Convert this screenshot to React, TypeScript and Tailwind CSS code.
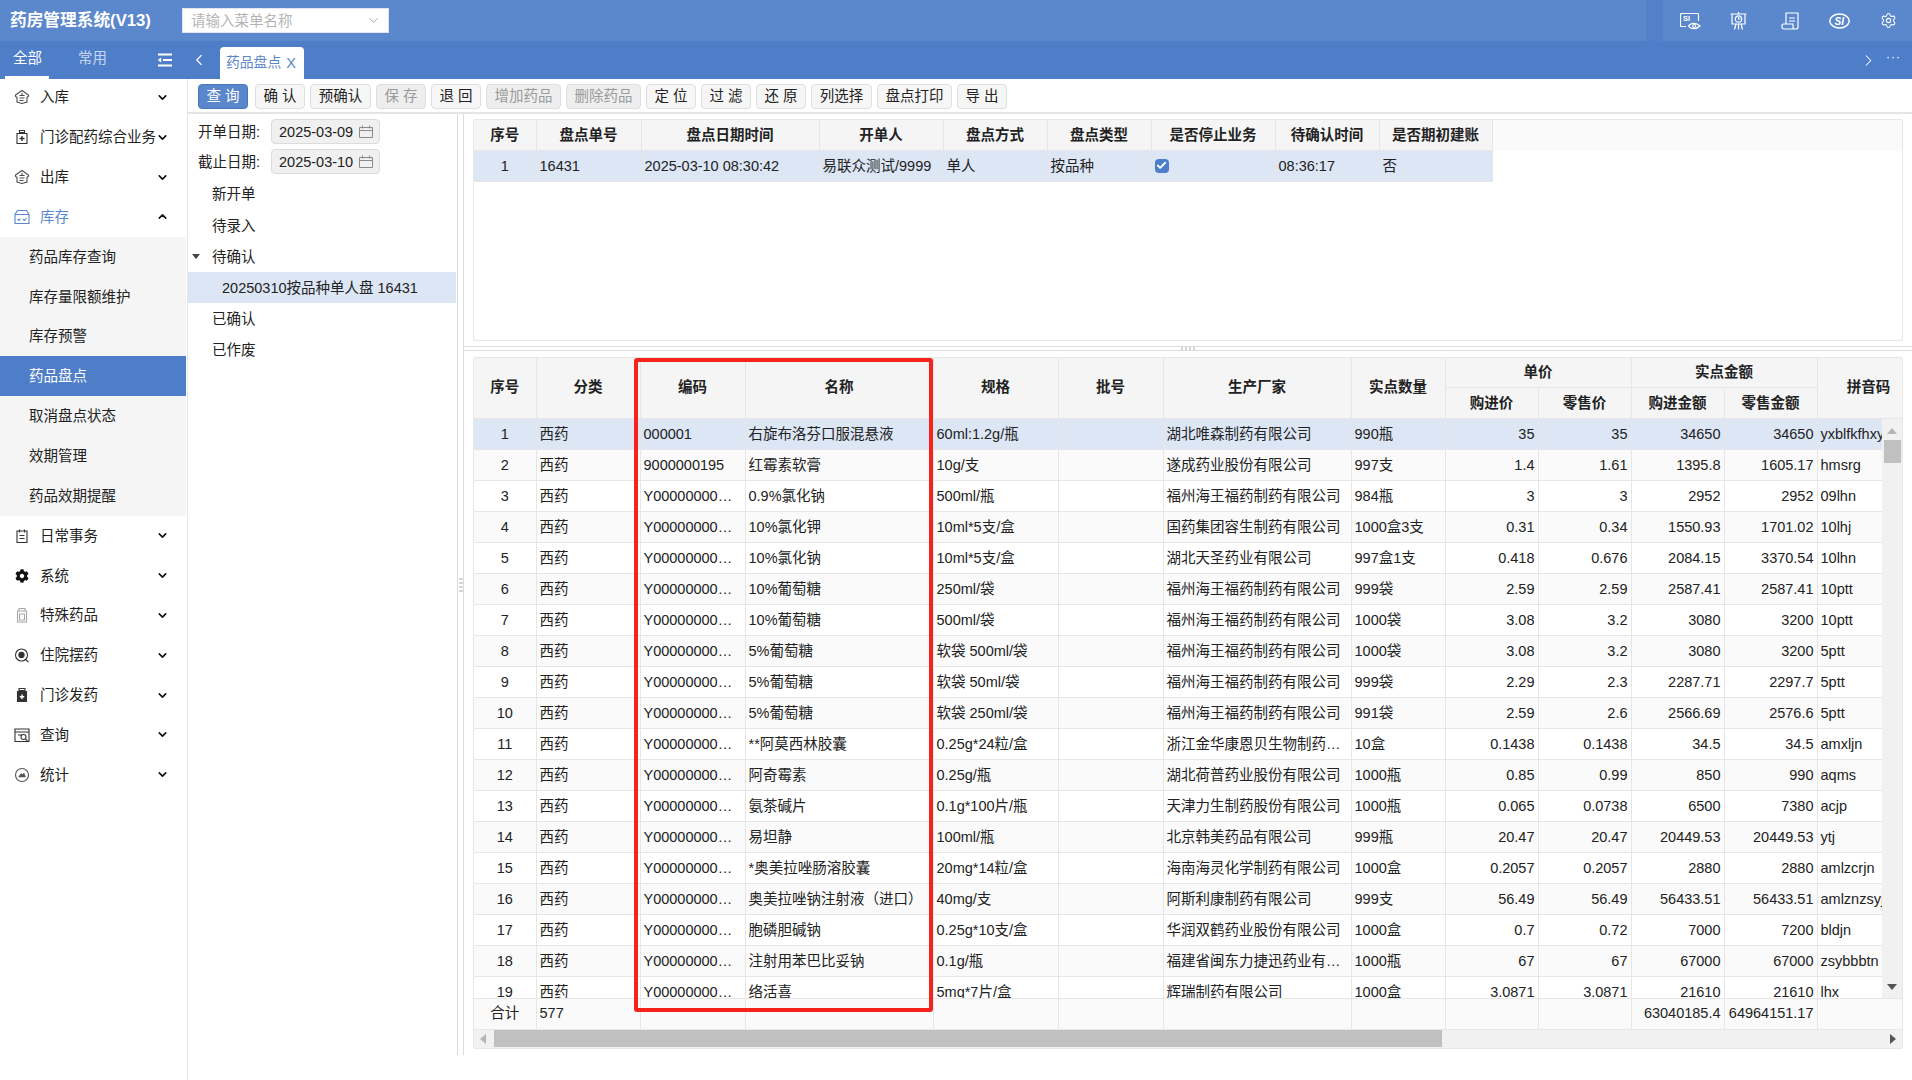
import { ChevronDown, ChevronLeft, ChevronRight, ChevronUp, Check, Settings } from "lucide-react";
import { FaCog } from "react-icons/fa";
import type { ReactNode } from "react";

const line = "#4a4a4a";

function Ico({ children, color = line, size = 16 }: { children: ReactNode; color?: string; size?: number }) {
  return (
    <svg width={size} height={size} viewBox="0 0 16 16" fill="none" stroke={color} strokeWidth="1.1">
      {children}
    </svg>
  );
}

const HouseIcon = () => (
  <Ico>
    <path d="M8 1.5 14.5 6v1.2L13 8.5V13l-5 1.5L3 13V8.5L1.5 7.2V6z" />
    <path d="M5.5 6.5h5M5.5 9h5M5.5 11.5h4M8 4v2" />
  </Ico>
);
const BottlePlusIcon = () => (
  <Ico color="#333">
    <path d="M5.5 1.5h5v2h-5zM3 4.5h10v10H3z" />
    <path d="M8 7v5M5.5 9.5h5" strokeWidth="1.4" />
  </Ico>
);
const StockIcon = () => (
  <Ico color="#5a86cb">
    <path d="M3.5 1.5h9L15 5.5v9H1v-9zM1 5.5h14" />
    <path d="M3.5 10l1.5 1.5 1.5-2M9 10l1.5 1.5 2-2.5" />
  </Ico>
);
const ClipboardIcon = () => (
  <Ico color="#333">
    <path d="M3 3h10v11.5H3zM5.5 1.5v3M10.5 1.5v3M5.5 7.5h5M5.5 10.5h5" />
  </Ico>
);
const JarIcon = () => (
  <Ico color="#a8a8a8">
    <path d="M5 1.5h6v2.5H5zM3.5 4h9v11h-9z" />
    <path d="M5.5 7h5v6h-5z" />
  </Ico>
);
const EyeSearchIcon = () => (
  <Ico color="#333">
    <circle cx="7.5" cy="8" r="6" />
    <circle cx="7.5" cy="8" r="2.6" fill="#333" />
    <path d="M11.5 12.5 14.5 15" />
  </Ico>
);
const BottleFillIcon = () => (
  <Ico color="#333">
    <path d="M5 1.5h6v2H5z" />
    <path d="M3.5 4.5h9v10h-9z" fill="#333" />
    <path d="M8 7.5v4.5M5.8 9.8h4.4" stroke="#fff" strokeWidth="1.4" />
  </Ico>
);
const QueryIcon = () => (
  <Ico color="#333">
    <path d="M1 2h14v12.5H1zM1 5h14M4 8h4" />
    <circle cx="9.5" cy="10" r="2.5" />
    <path d="M11.5 12l2 2" />
  </Ico>
);
const StatIcon = () => (
  <Ico color="#555">
    <circle cx="8" cy="8" r="6.5" />
    <path d="M4.5 10 7 6.5l1.5 1L10 6l1.5 4z" fill="#555" strokeWidth="0.5" />
  </Ico>
);

const topMenus: { label: string; icon: ReactNode }[] = [
  { label: "日常事务", icon: <ClipboardIcon /> },
  { label: "系统", icon: <FaCog size={14} color="#111" /> },
  { label: "特殊药品", icon: <JarIcon /> },
  { label: "住院摆药", icon: <EyeSearchIcon /> },
  { label: "门诊发药", icon: <BottleFillIcon /> },
  { label: "查询", icon: <QueryIcon /> },
  { label: "统计", icon: <StatIcon /> },
];

const subMenus = ["药品库存查询", "库存量限额维护", "库存预警", "药品盘点", "取消盘点状态", "效期管理", "药品效期提醒"];

const buttons = [
  { t: "查 询", w: "w-[50px] mr-[2px]", kind: "primary" },
  { t: "确 认", w: "w-[50px]", kind: "normal" },
  { t: "预确认", w: "w-[61px]", kind: "normal" },
  { t: "保 存", w: "w-[50px]", kind: "disabled" },
  { t: "退 回", w: "w-[50px]", kind: "normal" },
  { t: "增加药品", w: "w-[75px]", kind: "disabled" },
  { t: "删除药品", w: "w-[75px]", kind: "disabled" },
  { t: "定 位", w: "w-[50px]", kind: "normal" },
  { t: "过 滤", w: "w-[50px]", kind: "normal" },
  { t: "还 原", w: "w-[50px]", kind: "normal" },
  { t: "列选择", w: "w-[61px]", kind: "normal" },
  { t: "盘点打印", w: "w-[75px]", kind: "normal" },
  { t: "导 出", w: "w-[50px]", kind: "normal" },
];

const Y = "Y00000000…";
const FZ = "福州海王福药制药有限公司";
const rows: string[][] = [
  ["000001", "右旋布洛芬口服混悬液", "60ml:1.2g/瓶", "湖北唯森制药有限公司", "990瓶", "35", "35", "34650", "34650", "yxblfkfhxy"],
  ["9000000195", "红霉素软膏", "10g/支", "遂成药业股份有限公司", "997支", "1.4", "1.61", "1395.8", "1605.17", "hmsrg"],
  [Y, "0.9%氯化钠", "500ml/瓶", FZ, "984瓶", "3", "3", "2952", "2952", "09lhn"],
  [Y, "10%氯化钾", "10ml*5支/盒", "国药集团容生制药有限公司", "1000盒3支", "0.31", "0.34", "1550.93", "1701.02", "10lhj"],
  [Y, "10%氯化钠", "10ml*5支/盒", "湖北天圣药业有限公司", "997盒1支", "0.418", "0.676", "2084.15", "3370.54", "10lhn"],
  [Y, "10%葡萄糖", "250ml/袋", FZ, "999袋", "2.59", "2.59", "2587.41", "2587.41", "10ptt"],
  [Y, "10%葡萄糖", "500ml/袋", FZ, "1000袋", "3.08", "3.2", "3080", "3200", "10ptt"],
  [Y, "5%葡萄糖", "软袋 500ml/袋", FZ, "1000袋", "3.08", "3.2", "3080", "3200", "5ptt"],
  [Y, "5%葡萄糖", "软袋 50ml/袋", FZ, "999袋", "2.29", "2.3", "2287.71", "2297.7", "5ptt"],
  [Y, "5%葡萄糖", "软袋 250ml/袋", FZ, "991袋", "2.59", "2.6", "2566.69", "2576.6", "5ptt"],
  [Y, "**阿莫西林胶囊", "0.25g*24粒/盒", "浙江金华康恩贝生物制药…", "10盒", "0.1438", "0.1438", "34.5", "34.5", "amxljn"],
  [Y, "阿奇霉素", "0.25g/瓶", "湖北荷普药业股份有限公司", "1000瓶", "0.85", "0.99", "850", "990", "aqms"],
  [Y, "氨茶碱片", "0.1g*100片/瓶", "天津力生制药股份有限公司", "1000瓶", "0.065", "0.0738", "6500", "7380", "acjp"],
  [Y, "易坦静", "100ml/瓶", "北京韩美药品有限公司", "999瓶", "20.47", "20.47", "20449.53", "20449.53", "ytj"],
  [Y, "*奥美拉唑肠溶胶囊", "20mg*14粒/盒", "海南海灵化学制药有限公司", "1000盒", "0.2057", "0.2057", "2880", "2880", "amlzcrjn"],
  [Y, "奥美拉唑钠注射液（进口）", "40mg/支", "阿斯利康制药有限公司", "999支", "56.49", "56.49", "56433.51", "56433.51", "amlznzsyj"],
  [Y, "胞磷胆碱钠", "0.25g*10支/盒", "华润双鹤药业股份有限公司", "1000盒", "0.7", "0.72", "7000", "7200", "bldjn"],
  [Y, "注射用苯巴比妥钠", "0.1g/瓶", "福建省闽东力捷迅药业有…", "1000瓶", "67", "67", "67000", "67000", "zsybbbtn"],
  [Y, "络活喜", "5mg*7片/盒", "辉瑞制药有限公司", "1000盒", "3.0871", "3.0871", "21610", "21610", "lhx"],
];

const colW = [62, 104, 105, 188, 125, 105, 188, 94, 93, 93, 93, 93];
const topW = [62, 105, 178, 124, 104, 104, 124, 104, 113];
const topHeads = ["序号", "盘点单号", "盘点日期时间", "开单人", "盘点方式", "盘点类型", "是否停止业务", "待确认时间", "是否期初建账"];

function Cols({ widths }: { widths: number[] }) {
  return (
    <colgroup>
      {widths.map((w, i) => (
        <col key={i} style={{ width: w }} />
      ))}
    </colgroup>
  );
}

const th = "border-r border-b border-[#e6e6e6] bg-[#f5f5f5] font-bold text-center p-0 text-[#222]";
const thr = "border-r border-b border-[#e6e6e6] bg-[#f5f5f5] font-bold text-center p-0 pb-[2px] text-[#222]";
const td = "border-r border-b border-[#e6e6e6] px-[3px] py-0 truncate";

function SideMenu({ label, icon, open, active }: { label: string; icon: ReactNode; open?: boolean; active?: boolean }) {
  return (
    <div className={`h-[39.85px] flex items-center pl-[14px] relative ${active ? "text-[#5a86cb]" : "text-[#222]"}`}>
      <span className="w-4 flex justify-center mr-[10px]">{icon}</span>
      <span className="whitespace-nowrap">{label}</span>
      <span className="absolute left-[156px] text-[#111]">
        {open ? <ChevronUp size={13} strokeWidth={3} /> : <ChevronDown size={13} strokeWidth={3} />}
      </span>
    </div>
  );
}

function DateField({ label, value }: { label: string; value: string }) {
  return (
    <div className="flex items-center h-[25px]">
      <span className="w-[73px] text-[#222]">{label}</span>
      <div className="w-[109px] h-[25px] bg-[#f0f0f0] border border-[#dcdcdc] rounded-sm flex items-center pl-[7px] gap-[6px]">
        <span>{value}</span>
        <svg width="14" height="13" viewBox="0 0 14 13" fill="none" stroke="#8a8a8a">
          <path d="M.5 2.5h13v10H.5zM.5 5.5h13M3.5 .5v3M10.5 .5v3" />
        </svg>
      </div>
    </div>
  );
}

export default function App() {
  return (
    <div className="w-[1912px] h-[1080px] overflow-hidden bg-white flex flex-col text-[14.5px] leading-[18px] text-[#222] font-['Liberation_Sans','Noto_Sans_CJK_SC',sans-serif]">
      {/* top bar */}
      <div className="h-[41px] bg-[#5b87cc] flex items-center relative shrink-0">
        <span className="pl-[10px] w-[182px] text-white font-bold text-[16.7px] whitespace-nowrap">药房管理系统(V13)</span>
        <div className="w-[207px] h-[25px] bg-white border border-[#dfe6f2] flex items-center justify-between pl-2 pr-[7px] text-[#b5b5b5]">
          <span>请输入菜单名称</span>
          <ChevronDown size={15} strokeWidth={1.2} color="#888" />
        </div>
        <div className="absolute left-[1646px] top-0 w-[17px] h-[41px] bg-[#5380c8]" />
        <div className="ml-auto flex items-center text-white">
          <svg className="mr-[29px]" width="21" height="18" viewBox="0 0 21 18" fill="none" stroke="#fff" strokeWidth="1.2">
            <path d="M6 14.5H1.5a1 1 0 0 1-1-1v-11a1 1 0 0 1 1-1h16a1 1 0 0 1 1 1V9" />
            <text x="3" y="9" fill="#fff" stroke="none" fontSize="7.5" fontWeight="700">SI</text>
            <path d="M8.5 14c2.500-3.500 8-3.500 11.500 0-3.500 3.500-9 3.500-11.500 0z" />
            <circle cx="14.200" cy="14" r="1.500" />
          </svg>
          <svg className="mr-[34px]" width="17" height="18" viewBox="0 0 17 18" fill="none" stroke="#fff" strokeWidth="1.2">
            <path d="M.5 2h16M2 2v10h13V2M8.500 0v2M6 12l-1.500 5.500M8.500 12v5.500M11 12l1.500 5.500" />
            <circle cx="8.500" cy="7" r="3.200" />
            <path d="M8.500 5v2h2" />
          </svg>
          <svg className="mr-[30px]" width="18" height="18" viewBox="0 0 18 18" fill="none" stroke="#fff" strokeWidth="1.2">
            <path d="M5 12V1h12v14a2 2 0 0 1-2 2H3a2 2 0 0 1-2-2v-1.500a1.500 1.500 0 0 1 1.500-1.500H12v3a2 2 0 0 0 2 2" />
            <path d="M8 6h6M8 9h6" />
          </svg>
          <svg className="mr-[30px]" width="21" height="16" viewBox="0 0 21 16" fill="none" stroke="#fff" strokeWidth="1.5">
            <ellipse cx="10.500" cy="8" rx="9.700" ry="7" />
            <text x="5.500" y="11.500" fill="#fff" stroke="none" fontSize="10" fontWeight="700" fontStyle="italic">SI</text>
          </svg>
          <Settings className="mr-[15px]" size={17} strokeWidth={1.5} />
        </div>
      </div>

      {/* tab bar */}
      <div className="h-[38px] bg-[#4f7ec9] flex shrink-0 relative z-10">
        <div className="w-[186px] flex relative text-white">
          <span className="absolute left-[13px] top-[8px]">全部</span>
          <span className="absolute left-[78px] top-[8px] text-[#c6d6ef]">常用</span>
          <div className="absolute left-[5px] bottom-0 w-[44px] h-[3px] bg-white" />
          <svg className="absolute left-[158px] top-[12px]" width="14" height="14" viewBox="0 0 14 14" fill="none" stroke="#fff" strokeWidth="2">
            <path d="M0 1.500h14M5 7h9M0 12.500h14" />
            <path d="M0 7l3-2v4z" fill="#fff" strokeWidth="0.5" />
          </svg>
        </div>
        <ChevronLeft className="ml-[4px] mt-[10px]" size={18} strokeWidth={1.5} color="#fff" />
        <div className="ml-[12px] mt-[6px] w-[84px] h-[32px] bg-white rounded-t-sm flex items-center pl-[6px] gap-[5px] text-[#5a86cb] whitespace-nowrap">
          <span className="text-[13.800px]">药品盘点</span>
          <span>X</span>
        </div>
        <div className="ml-auto flex items-start text-white pt-[10px]">
          <ChevronRight size={19} strokeWidth={1.3} color="#fff" />
          <span className="ml-[8px] mr-[11px] leading-[12px] tracking-[1px] text-[12px]">···</span>
        </div>
      </div>

      <div className="flex flex-1 min-h-0">
        {/* sidebar */}
        <div className="w-[188px] shrink-0 border-r border-[#e6e6e6] pr-px">
          <div className="-mt-[1.5px]">
            <SideMenu label="入库" icon={<HouseIcon />} />
            <SideMenu label="门诊配药综合业务" icon={<BottlePlusIcon />} />
            <SideMenu label="出库" icon={<HouseIcon />} />
            <SideMenu label="库存" icon={<StockIcon />} open active />
            <div className="bg-[#f5f5f5]">
              {subMenus.map((s) => (
                <div
                  key={s}
                  className={`h-[39.85px] flex items-center pl-[29px] ${s === "药品盘点" ? "bg-[#4f7ec9] text-white" : "text-[#222]"}`}
                >
                  {s}
                </div>
              ))}
            </div>
            {topMenus.map((m) => (
              <SideMenu key={m.label} label={m.label} icon={m.icon} />
            ))}
          </div>
        </div>

        <div className="flex-1 flex flex-col min-w-0">
          {/* toolbar */}
          <div className="h-[35px] shrink-0 border-b-2 border-[#e4e4e4] pl-[10px] pt-[5px] flex gap-[5px]">
            {buttons.map((b) => (
              <div
                key={b.t}
                className={`${b.w} h-[25px] flex items-center justify-center pb-px rounded-sm border whitespace-nowrap ${
                  b.kind === "primary"
                    ? "bg-[#5a86cb] border-[#4a76bb] text-white"
                    : b.kind === "disabled"
                      ? "bg-[#eeeeee] border-[#dedede] text-[#9a9a9a]"
                      : "bg-[#f6f6f6] border-[#dedede] text-[#222]"
                }`}
              >
                {b.t}
              </div>
            ))}
          </div>

          <div className="flex h-[941px]">
            {/* left tree panel */}
            <div className="w-[269px] shrink-0 pt-[5px]">
              <div className="pl-[10px] flex flex-col gap-[5px]">
                <DateField label="开单日期:" value="2025-03-09" />
                <DateField label="截止日期:" value="2025-03-10" />
              </div>
              <div className="mt-[4px]">
                <div className="h-[31px] flex items-center pl-[24px]">新开单</div>
                <div className="h-[31px] mt-px flex items-center pl-[24px]">待录入</div>
                <div className="h-[31px] flex items-center pl-[4px]">
                  <span className="w-0 h-0 border-x-[4px] border-t-[5px] border-x-transparent border-t-[#444] mr-[12px]" />
                  待确认
                </div>
                <div className="h-[31px] mr-px flex items-center pl-[34px] bg-[#dce6f5]">20250310按品种单人盘 16431</div>
                <div className="h-[31px] flex items-center pl-[24px]">已确认</div>
                <div className="h-[31px] flex items-center pl-[24px]">已作废</div>
              </div>
            </div>

            {/* vertical splitter */}
            <div className="w-[7px] shrink-0 border-x border-[#dcdcdc] flex flex-col justify-center items-center gap-[2px]">
              <div className="w-[4px] h-[2px] bg-[#d5d5d5]" />
              <div className="w-[4px] h-[2px] bg-[#d5d5d5]" />
              <div className="w-[4px] h-[2px] bg-[#d5d5d5]" />
              <div className="w-[4px] h-[2px] bg-[#d5d5d5]" />
            </div>

            <div className="flex-1 min-w-0 pl-[9px] pt-[5px] flex flex-col">
              {/* top grid */}
              <div className="h-[222px] w-[1430px] border border-[#e6e6e6] rounded-[2px] shrink-0">
                <div className="bg-[#fafafa] h-[31px]">
                  <table className="table-fixed border-collapse w-[1018px]">
                    <Cols widths={topW} />
                    <thead>
                      <tr className="h-[30px]">
                        {topHeads.map((h) => (
                          <th key={h} className={th}>
                            {h}
                          </th>
                        ))}
                      </tr>
                    </thead>
                    <tbody>
                      <tr className="h-[31px] bg-[#dce6f5]">
                        <td className={`${td} text-center`}>1</td>
                        <td className={td}>16431</td>
                        <td className={td}>2025-03-10 08:30:42</td>
                        <td className={td}>易联众测试/9999</td>
                        <td className={td}>单人</td>
                        <td className={td}>按品种</td>
                        <td className={td}>
                          <span className="w-[14px] h-[14px] rounded-sm bg-[#4f7ec9] flex items-center justify-center">
                            <Check size={11} strokeWidth={4} color="#fff" />
                          </span>
                        </td>
                        <td className={td}>08:36:17</td>
                        <td className={td}>否</td>
                      </tr>
                    </tbody>
                  </table>
                </div>
              </div>

              {/* horizontal splitter */}
              <div className="h-[5px] mt-[5px] -ml-[9px] border-y border-[#dcdcdc] shrink-0 flex justify-center items-center gap-[2px]">
                <div className="w-[2px] h-[3px] bg-[#d5d5d5]" />
                <div className="w-[2px] h-[3px] bg-[#d5d5d5]" />
                <div className="w-[2px] h-[3px] bg-[#d5d5d5]" />
                <div className="w-[2px] h-[3px] bg-[#d5d5d5]" />
              </div>

              {/* detail grid */}
              <div className="mt-[6px] w-[1430px] h-[692px] border border-[#e6e6e6] rounded-[2px] shrink-0 relative flex flex-col">
                <table className="table-fixed border-collapse w-[1428px] shrink-0">
                  <Cols widths={[...colW, 85]} />
                  <thead>
                    <tr className="h-[29px]">
                      <th rowSpan={2} className={thr}>序号</th>
                      <th rowSpan={2} className={thr}>分类</th>
                      <th rowSpan={2} className={thr}>编码</th>
                      <th rowSpan={2} className={thr}>名称</th>
                      <th rowSpan={2} className={thr}>规格</th>
                      <th rowSpan={2} className={thr}>批号</th>
                      <th rowSpan={2} className={thr}>生产厂家</th>
                      <th rowSpan={2} className={thr}>实点数量</th>
                      <th colSpan={2} className={th}>单价</th>
                      <th colSpan={2} className={th}>实点金额</th>
                      <th rowSpan={2} className={`${thr} pl-[18px]`}>拼音码</th>
                    </tr>
                    <tr className="h-[31px]">
                      <th className={th}>购进价</th>
                      <th className={th}>零售价</th>
                      <th className={th}>购进金额</th>
                      <th className={th}>零售金额</th>
                    </tr>
                  </thead>
                </table>

                <div className="h-[579px] flex shrink-0">
                  <div className="w-[1408px] h-[579px] overflow-hidden">
                    <table className="table-fixed border-collapse w-[1408px]">
                      <Cols widths={[...colW, 65]} />
                      <tbody>
                        {rows.map((r, i) => (
                          <tr
                            key={i}
                            className={`h-[31px] ${i === 0 ? "bg-[#dce6f5]" : i % 2 === 1 ? "bg-[#fafafa]" : "bg-white"}`}
                          >
                            <td className={`${td} text-center`}>{i + 1}</td>
                            <td className={td}>西药</td>
                            <td className={td}>{r[0]}</td>
                            <td className={td}>{r[1]}</td>
                            <td className={td}>{r[2]}</td>
                            <td className={td}></td>
                            <td className={td}>{r[3]}</td>
                            <td className={td}>{r[4]}</td>
                            <td className={`${td} text-right`}>{r[5]}</td>
                            <td className={`${td} text-right`}>{r[6]}</td>
                            <td className={`${td} text-right`}>{r[7]}</td>
                            <td className={`${td} text-right`}>{r[8]}</td>
                            <td className="border-b border-[#e6e6e6] pl-[3px] overflow-hidden whitespace-nowrap">{r[9]}</td>
                          </tr>
                        ))}
                      </tbody>
                    </table>
                  </div>
                  {/* vertical scrollbar */}
                  <div className="w-[20px] bg-[#f1f1f1] flex flex-col items-center relative">
                    <div className="mt-[9px] w-0 h-0 border-x-[5px] border-b-[6px] border-x-transparent border-b-[#b5b5b5]" />
                    <div className="mt-[6px] w-[17px] h-[23px] bg-[#c0c0c0]" />
                    <div className="mt-auto mb-[8px] w-0 h-0 border-x-[5px] border-t-[6px] border-x-transparent border-t-[#555]" />
                  </div>
                </div>

                {/* footer */}
                <table className="table-fixed border-collapse w-[1428px] shrink-0 border-t border-[#e6e6e6]">
                  <Cols widths={[...colW, 85]} />
                  <tbody>
                    <tr className="h-[31px] bg-[#fafafa]">
                      <td className={`${td} text-center pb-px`}>合计</td>
                      <td className={`${td} pb-px`}>577</td>
                      <td className={td}></td>
                      <td className={td}></td>
                      <td className={td}></td>
                      <td className={td}></td>
                      <td className={td}></td>
                      <td className={td}></td>
                      <td className={td}></td>
                      <td className={td}></td>
                      <td className="border-r border-b border-[#e6e6e6] pr-[3px] pb-px text-right whitespace-nowrap">63040185.4</td>
                      <td className="border-r border-b border-[#e6e6e6] pr-[3px] pb-px text-right whitespace-nowrap">64964151.17</td>
                      <td className="border-b border-[#e6e6e6]"></td>
                    </tr>
                  </tbody>
                </table>

                {/* horizontal scrollbar */}
                <div className="flex-1 bg-[#f1f1f1] flex items-center">
                  <div className="ml-[6px] w-0 h-0 border-y-[5px] border-r-[6px] border-y-transparent border-r-[#b5b5b5]" />
                  <div className="ml-[8px] w-[948px] h-[17px] bg-[#c0c0c0]" />
                  <div className="ml-auto mr-[6px] w-0 h-0 border-y-[5px] border-l-[6px] border-y-transparent border-l-[#555]" />
                </div>

                {/* red highlight box */}
                <div className="absolute left-[160px] top-0 w-[299px] h-[654px] border-4 border-[#f5231b] rounded-[3px] pointer-events-none" />
              </div>
            </div>
          </div>
        </div>
      </div>
    </div>
  );
}
